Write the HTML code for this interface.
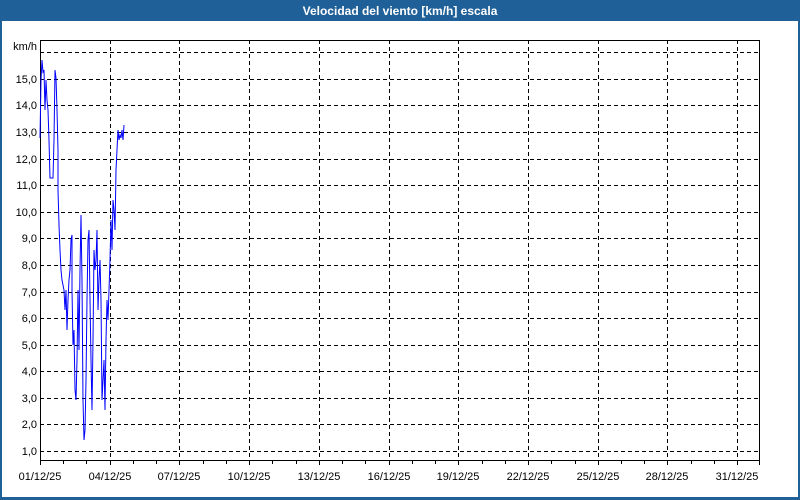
<!DOCTYPE html>
<html><head><style>
body{margin:0;width:800px;height:500px;overflow:hidden;background:#fff;font-family:"Liberation Sans",sans-serif}
</style></head><body>
<svg width="800" height="500" xmlns="http://www.w3.org/2000/svg" style="position:absolute;left:0;top:0">
<rect x="0" y="0" width="800" height="500" fill="#1f6098"/>
<rect x="2" y="21" width="796" height="476" fill="#fff"/>
<text x="400" y="15" fill="#fff" font-size="12" font-weight="bold" text-anchor="middle" font-family="Liberation Sans, sans-serif">Velocidad del viento [km/h] escala</text>
<g stroke="#000" stroke-width="1" stroke-dasharray="4,3" shape-rendering="crispEdges">
<line x1="40" y1="52.5" x2="760" y2="52.5"/>
<line x1="40" y1="79.5" x2="760" y2="79.5"/>
<line x1="40" y1="105.5" x2="760" y2="105.5"/>
<line x1="40" y1="132.5" x2="760" y2="132.5"/>
<line x1="40" y1="159.5" x2="760" y2="159.5"/>
<line x1="40" y1="185.5" x2="760" y2="185.5"/>
<line x1="40" y1="212.5" x2="760" y2="212.5"/>
<line x1="40" y1="238.5" x2="760" y2="238.5"/>
<line x1="40" y1="265.5" x2="760" y2="265.5"/>
<line x1="40" y1="292.5" x2="760" y2="292.5"/>
<line x1="40" y1="318.5" x2="760" y2="318.5"/>
<line x1="40" y1="345.5" x2="760" y2="345.5"/>
<line x1="40" y1="371.5" x2="760" y2="371.5"/>
<line x1="40" y1="398.5" x2="760" y2="398.5"/>
<line x1="40" y1="424.5" x2="760" y2="424.5"/>
<line x1="40" y1="451.5" x2="760" y2="451.5"/>
<line x1="110.5" y1="40" x2="110.5" y2="460"/>
<line x1="179.5" y1="40" x2="179.5" y2="460"/>
<line x1="249.5" y1="40" x2="249.5" y2="460"/>
<line x1="319.5" y1="40" x2="319.5" y2="460"/>
<line x1="389.5" y1="40" x2="389.5" y2="460"/>
<line x1="458.5" y1="40" x2="458.5" y2="460"/>
<line x1="528.5" y1="40" x2="528.5" y2="460"/>
<line x1="598.5" y1="40" x2="598.5" y2="460"/>
<line x1="667.5" y1="40" x2="667.5" y2="460"/>
<line x1="737.5" y1="40" x2="737.5" y2="460"/>
</g>
<rect x="40.5" y="40.5" width="719" height="420" fill="none" stroke="#000" shape-rendering="crispEdges"/>
<g stroke="#000" shape-rendering="crispEdges" id="ticks"></g>
<polyline fill="none" stroke="#0000ff" stroke-width="1" points="40,138 41,80 42,60 43,72 44,70 45,110 46,80 47,100 48,110 49,140 50,178 51,178 52,178 53,178 54,140 55,70 56,78 57,110 58,150 58,190 59,225 60,250 61,270 62,280 64,290 65,310 66,290 67,330 68,300 69,280 70,270 71,240 72,235 72,290 73,345 74,330 75,390 76,400 77,360 78,290 79,350 80,270 81,215 82,280 83,400 84,440 85,430 86,380 87,300 88,240 89,230 90,300 91,360 92,410 93,340 94,250 95,270 96,260 97,230 98,310 99,280 100,260 101,300 102,400 103,380 104,360 105,410 106,340 107,300 108,320 109,290 110,260 111,220 112,250 113,200 114,210 115,230 116,170 117,150 118,130 119,140 120,135 121,138 122,130 123,140 124,125"/>
<g font-size="11" fill="#000" text-anchor="end" font-family="Liberation Sans, sans-serif">
<text x="37" y="50">km/h</text>
<text x="37" y="83">15,0</text>
<text x="37" y="109">14,0</text>
<text x="37" y="136">13,0</text>
<text x="37" y="163">12,0</text>
<text x="37" y="189">11,0</text>
<text x="37" y="216">10,0</text>
<text x="37" y="242">9,0</text>
<text x="37" y="269">8,0</text>
<text x="37" y="296">7,0</text>
<text x="37" y="322">6,0</text>
<text x="37" y="349">5,0</text>
<text x="37" y="375">4,0</text>
<text x="37" y="402">3,0</text>
<text x="37" y="428">2,0</text>
<text x="37" y="455">1,0</text>
</g>
<g font-size="11" fill="#000" text-anchor="middle" font-family="Liberation Sans, sans-serif">
<text x="40" y="480">01/12/25</text>
<text x="110" y="480">04/12/25</text>
<text x="179" y="480">07/12/25</text>
<text x="249" y="480">10/12/25</text>
<text x="319" y="480">13/12/25</text>
<text x="389" y="480">16/12/25</text>
<text x="458" y="480">19/12/25</text>
<text x="528" y="480">22/12/25</text>
<text x="598" y="480">25/12/25</text>
<text x="667" y="480">28/12/25</text>
<text x="737" y="480">31/12/25</text>
</g>
<path stroke="#000" shape-rendering="crispEdges" d="M40.5 460v5M63.5 460v4M86.5 460v4M110.5 460v5M133.5 460v4M156.5 460v4M179.5 460v5M203.5 460v4M226.5 460v4M249.5 460v5M272.5 460v4M296.5 460v4M319.5 460v5M342.5 460v4M365.5 460v4M389.5 460v5M412.5 460v4M435.5 460v4M458.5 460v5M482.5 460v4M505.5 460v4M528.5 460v5M551.5 460v4M575.5 460v4M598.5 460v5M621.5 460v4M644.5 460v4M667.5 460v5M691.5 460v4M714.5 460v4M737.5 460v5M759.5 460v5"/>
</svg>
</body></html>
